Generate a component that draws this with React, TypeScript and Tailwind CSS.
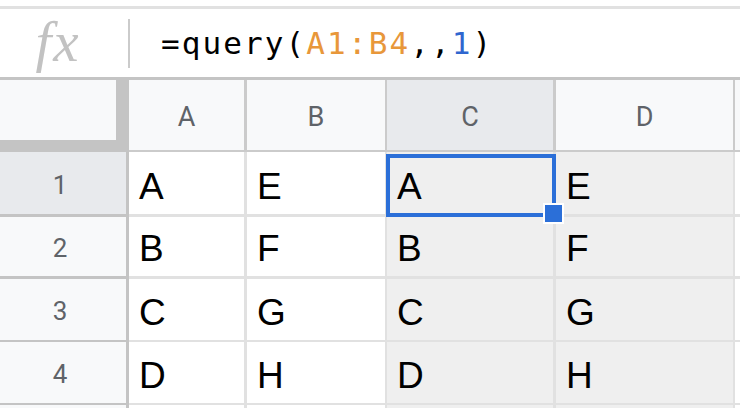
import React from 'react';

const rows = [
  { n: 1, h: 'h-[65px]', b: 'border-b-[3px]', cells: ['A', 'E', 'A', 'E'] },
  { n: 2, h: 'h-[62px]', b: 'border-b-[3px]', cells: ['B', 'F', 'B', 'F'] },
  { n: 3, h: 'h-[63px]', b: 'border-b-2', cells: ['C', 'G', 'C', 'G'] },
  { n: 4, h: 'h-[63px]', b: 'border-b-2', cells: ['D', 'H', 'D', 'H'] },
];

// widths include the right-hand gridline
const cols = [
  { w: 'w-[118px]', r: 'border-r-[3px]', bg: 'bg-white' },
  { w: 'w-[140px]', r: 'border-r-2', bg: 'bg-white' },
  { w: 'w-[169px]', r: 'border-r-[3px]', bg: 'bg-[#efefef]' },
  { w: 'w-[179px]', r: 'border-r-2', bg: 'bg-[#efefef]' },
];

const heads = ['A', 'B', 'C', 'D'];

const App: React.FC = () => {
  return (
    <div className="w-[740px] h-[408px] overflow-hidden bg-white flex flex-col">
      <div className="h-[6px] shrink-0 bg-white" />
      <div className="h-[3px] shrink-0 bg-[#e1e1e1]" />

      {/* formula bar */}
      <div className="h-[68px] shrink-0 flex items-center">
        <div className="w-[128px] flex justify-center pr-[12px] pb-[4px]">
          <span className="font-['Liberation_Serif',serif] italic text-[57px] leading-none text-[#c2c2c2] tracking-[2px]">
            fx
          </span>
        </div>
        <div className="w-[2px] h-[49px] bg-[#cbcbcb]" />
        <div className="ml-[31px] font-['DejaVu_Sans_Mono',monospace] text-[31px] leading-none tracking-[2.1px] text-black">
          =query(<span className="text-[#e8973a]">A1:B4</span>,,<span className="text-[#2f66cf]">1</span>)
        </div>
      </div>
      <div className="h-[3px] shrink-0 bg-[#c4c4c4]" />

      {/* column headers */}
      <div className="h-[72px] shrink-0 flex">
        <div className="w-[129px] shrink-0 bg-[#c4c4c4]">
          <div className="w-[116px] h-[60px] bg-[#f8f9fa]" />
        </div>
        {cols.map((c, i) => (
          <div
            key={heads[i]}
            className={`${c.w} ${c.r} shrink-0 border-b-2 border-[#cbcbcb] flex items-center justify-center pt-[4px] font-['Roboto',sans-serif] text-[27px] text-[#5f6368] ${
              i === 2 ? 'bg-[#e8eaed]' : 'bg-[#f8f9fa]'
            }`}
          >
            {heads[i]}
          </div>
        ))}
        <div className="flex-1 border-b-2 border-[#cbcbcb] bg-[#f8f9fa]" />
      </div>

      {/* data rows */}
      {rows.map((row) => (
        <div key={row.n} className={`${row.h} shrink-0 flex`}>
          <div
            className={`w-[129px] shrink-0 border-r-[3px] ${row.b} border-[#c4c4c4] flex items-center justify-center pr-[6px] pt-[4px] font-['Roboto',sans-serif] text-[26px] text-[#5f6368] ${
              row.n === 1 ? 'bg-[#e8eaed]' : 'bg-[#f8f9fa]'
            }`}
          >
            {row.n}
          </div>
          {cols.map((c, i) => (
            <div
              key={i}
              className={`${c.w} ${c.r} ${row.b} ${c.bg} relative shrink-0 border-[#e1e1e1] flex items-end pl-[10px] pb-[9px] font-['Liberation_Sans',Arial,sans-serif] text-[37px] leading-none text-black`}
            >
              {row.cells[i]}
              {row.n === 1 && i === 2 && (
                <>
                  <div className="absolute left-[-1px] top-[2px] right-[-3px] bottom-[-3px] border-[4px] border-[#2b6fd8]" />
                  <div className="absolute left-[156px] top-[51px] w-[21px] h-[21px] border-2 border-white bg-[#2b6fd8] z-10" />
                </>
              )}
            </div>
          ))}
          <div className={`flex-1 ${row.b} border-[#e1e1e1] bg-white`} />
        </div>
      ))}

      {/* row 5 peeking */}
      <div className="flex-1 flex">
        <div className="w-[129px] shrink-0 border-r-[3px] border-[#c4c4c4] bg-[#f8f9fa]" />
        <div className="w-[118px] shrink-0 border-r-[3px] border-[#e1e1e1] bg-white" />
        <div className="w-[140px] shrink-0 border-r-2 border-[#e1e1e1] bg-white" />
        <div className="w-[169px] shrink-0 border-r-[3px] border-[#e1e1e1] bg-[#efefef]" />
        <div className="w-[179px] shrink-0 border-r-2 border-[#e1e1e1] bg-[#efefef]" />
        <div className="flex-1 bg-white" />
      </div>
    </div>
  );
};

export default App;
